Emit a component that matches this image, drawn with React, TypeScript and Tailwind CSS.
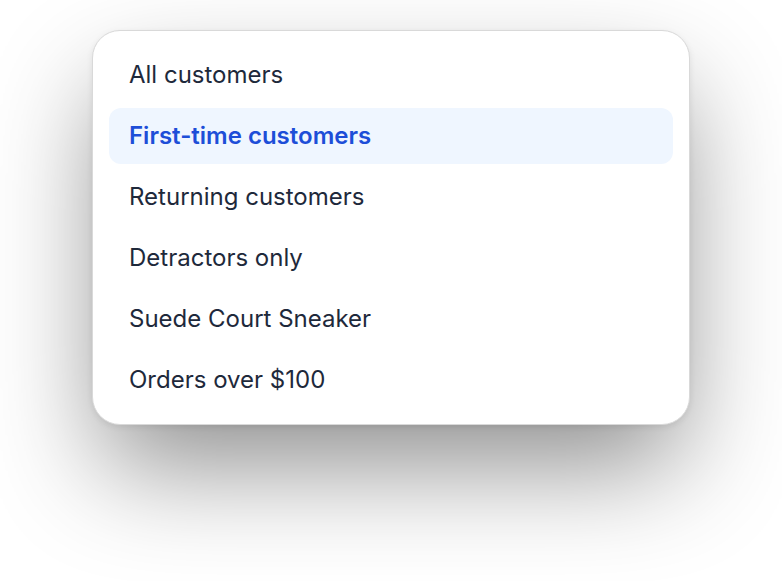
const segments = [
  'All customers',
  'First-time customers',
  'Returning customers',
  'Detractors only',
  'Suede Court Sneaker',
  'Orders over $100',
];

export default function App() {
  const active = 1;

  return (
    <div className="flex min-h-[581px] w-full justify-center bg-white pt-[30px] font-['Inter',sans-serif]">
      <div
        role="listbox"
        className="flex h-[395px] w-[598px] flex-col gap-[5px] rounded-[28px] border border-[#d9d9d9] bg-white p-4 shadow-[0_2px_6px_rgba(0,0,0,0.08),0_50px_110px_-10px_rgba(0,0,0,0.45)]"
      >
        {segments.map((label, i) => (
          <div
            key={label}
            role="option"
            aria-selected={i === active}
            className={
              i === active
                ? 'flex h-[56px] items-center rounded-xl bg-[#eff6ff] px-5 text-2xl font-semibold text-[#1d4ed8]'
                : 'flex h-[56px] items-center rounded-xl px-5 text-2xl text-[#1e293b]'
            }
          >
            {label}
          </div>
        ))}
      </div>
    </div>
  );
}
